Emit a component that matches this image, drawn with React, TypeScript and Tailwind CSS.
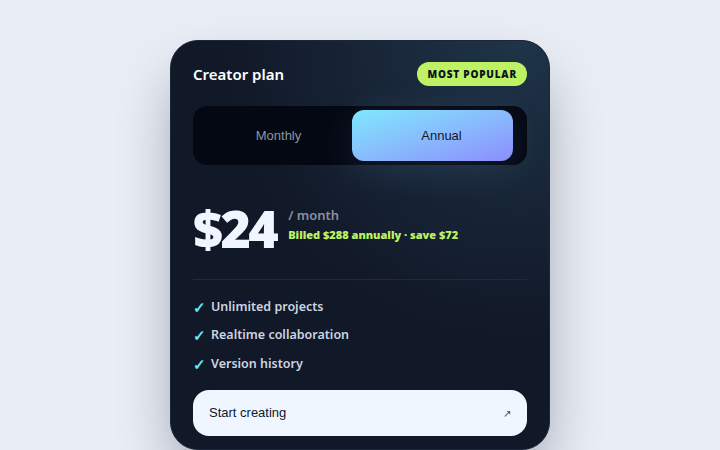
const features = ["Unlimited projects", "Realtime collaboration", "Version history"];

const sans = "font-['Noto_Sans',sans-serif]";
const open = "font-['Open_Sans',sans-serif]";
const arial = "font-['Liberation_Sans',Arial,sans-serif]";

function BillingToggle() {
  return (
    <div className="relative mt-5 grid h-[59px] grid-cols-2 rounded-[14px] bg-[#040812] p-1">
      <div className="absolute top-1 bottom-1 left-[159px] w-[161px] rounded-[12px] bg-gradient-to-br from-[#7ee8fd] to-[#8b8dfb] shadow-[0_8px_40px_rgba(148,197,255,0.12)]" />
      <button className={`relative ${arial} text-[13px] text-[#8b95a7]`}>Monthly</button>
      <button className={`relative ${arial} text-[13px] text-[#111827]`}>Annual</button>
    </div>
  );
}

function PlanCard() {
  return (
    <div className="w-[380px] overflow-hidden rounded-[28px] border border-[#1c2638] bg-[#111827] bg-[radial-gradient(circle_at_92%_0%,#1f3448_0%,rgba(17,24,39,0)_55%)] px-[22px] pt-[21px] pb-8 shadow-[0_30px_60px_-12px_rgba(15,23,42,0.45)]">
      <div className="flex h-6 items-center justify-between">
        <h2 className={`${sans} pt-px text-[15px] font-semibold text-white`}>Creator plan</h2>
        <span className={`${open} flex h-6 items-center rounded-full bg-[#bef264] px-[10px] text-[10px] font-extrabold tracking-[0.08em] text-[#0b1220]`}>
          MOST POPULAR
        </span>
      </div>

      <BillingToggle />

      <div className="mt-[37px] flex items-start">
        <span className={`${open} text-[52px] leading-none font-extrabold tracking-[-0.05em] text-[#f1f5ff]`}>$24</span>
        <div className="ml-[12px] pt-[3px]">
          <div className={`${sans} text-[13px] leading-5 font-semibold text-[#8791a3]`}>/ month</div>
          <div className={`${open} text-[11px] leading-5 font-extrabold text-[#bef264]`}>
            Billed $288 annually · save $72
          </div>
        </div>
      </div>

      <div className="mt-[25px] h-px bg-[#1f2a3a]" />

      <ul className="mt-[17px] flex flex-col gap-[8.5px]">
        {features.map((f) => (
          <li key={f} className="flex h-5 items-center">
            <span className={`${sans} w-[18px] text-[15px] font-bold text-[#67e8f9]`}>✓</span>
            <span className={`${sans} text-[12.5px] font-semibold text-[#cbd5e1]`}>{f}</span>
          </li>
        ))}
      </ul>

      <button className="mt-[16px] flex h-[46px] w-full items-center justify-between rounded-[16px] bg-[#f0f6ff] pr-[16px] pl-4">
        <span className={`${arial} text-[13px] text-[#0f172a]`}>Start creating</span>
        <span className={`${sans} text-[10px] text-[#1e3a5f]`}>↗</span>
      </button>
    </div>
  );
}

export default function App() {
  return (
    <div className="flex h-[450px] w-[720px] justify-center overflow-hidden bg-[#e9edf5] pt-10">
      <PlanCard />
    </div>
  );
}
